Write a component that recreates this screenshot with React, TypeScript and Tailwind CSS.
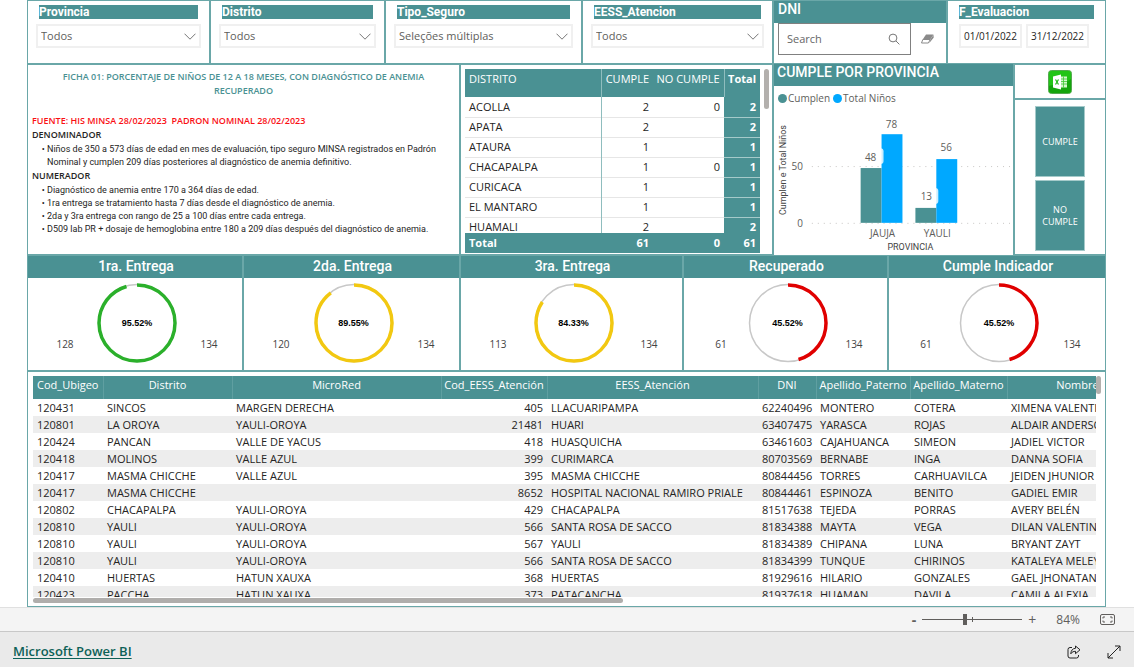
import { ReactNode } from "react";

const sum = { cumple: 61, noCumple: 0, total: 61 };

const districts = [
  { name: "ACOLLA", cumple: 2, noCumple: 0, total: 2 },
  { name: "APATA", cumple: 2, total: 2 },
  { name: "ATAURA", cumple: 1, total: 1 },
  { name: "CHACAPALPA", cumple: 1, noCumple: 0, total: 1 },
  { name: "CURICACA", cumple: 1, total: 1 },
  { name: "EL MANTARO", cumple: 1, total: 1 },
  { name: "HUAMALI", cumple: 2, total: 2 },
];

const gauges = [
  { title: "1ra. Entrega", value: 128, total: 134, percent: 95.52, color: "#2bb02b" },
  { title: "2da. Entrega", value: 120, total: 134, percent: 89.55, color: "#f2c811" },
  { title: "3ra. Entrega", value: 113, total: 134, percent: 84.33, color: "#f2c811" },
  { title: "Recuperado", value: 61, total: 134, percent: 45.52, color: "#e00000" },
  { title: "Cumple Indicador", value: 61, total: 134, percent: 45.52, color: "#e00000" },
];

const columns = [
  { name: "Cod_Ubigeo", width: "w-[70px]" },
  { name: "Distrito", width: "w-[129px]" },
  { name: "MicroRed", width: "w-[209px]" },
  { name: "Cod_EESS_Atención", width: "w-[106px]", right: true },
  { name: "EESS_Atención", width: "w-[211px]" },
  { name: "DNI", width: "w-[58px]", right: true },
  { name: "Apellido_Paterno", width: "w-[94px]" },
  { name: "Apellido_Materno", width: "w-[97px]" },
  { name: "Nombres", width: "w-[146px]" },
];

const rows = [
  ["120431", "SINCOS", "MARGEN DERECHA", "405", "LLACUARIPAMPA", "62240496", "MONTERO", "COTERA", "XIMENA VALENTINA"],
  ["120801", "LA OROYA", "YAULI-OROYA", "21481", "HUARI", "63407475", "YARASCA", "ROJAS", "ALDAIR ANDERSON"],
  ["120424", "PANCAN", "VALLE DE YACUS", "418", "HUASQUICHA", "63461603", "CAJAHUANCA", "SIMEON", "JADIEL VICTOR"],
  ["120418", "MOLINOS", "VALLE AZUL", "399", "CURIMARCA", "80703569", "BERNABE", "INGA", "DANNA SOFIA"],
  ["120417", "MASMA CHICCHE", "VALLE AZUL", "395", "MASMA CHICCHE", "80844456", "TORRES", "CARHUAVILCA", "JEIDEN JHUNIOR"],
  ["120417", "MASMA CHICCHE", "", "8652", "HOSPITAL NACIONAL RAMIRO PRIALE", "80844461", "ESPINOZA", "BENITO", "GADIEL EMIR"],
  ["120802", "CHACAPALPA", "YAULI-OROYA", "429", "CHACAPALPA", "81517638", "TEJEDA", "PORRAS", "AVERY BELÉN"],
  ["120810", "YAULI", "YAULI-OROYA", "566", "SANTA ROSA DE SACCO", "81834388", "MAYTA", "VEGA", "DILAN VALENTIN"],
  ["120810", "YAULI", "YAULI-OROYA", "567", "YAULI", "81834389", "CHIPANA", "LUNA", "BRYANT ZAYT"],
  ["120810", "YAULI", "YAULI-OROYA", "566", "SANTA ROSA DE SACCO", "81834399", "TUNQUE", "CHIRINOS", "KATALEYA MELEY"],
  ["120410", "HUERTAS", "HATUN XAUXA", "368", "HUERTAS", "81929616", "HILARIO", "GONZALES", "GAEL JHONATAN"],
  ["120423", "PACCHA", "HATUN XAUXA", "373", "PATACANCHA", "81937618", "HUAMAN", "DAVILA", "CAMILA ALEXIA"],
];

function Panel({ className = "", children }: { className?: string; children: ReactNode }) {
  return (
    <section className={"min-w-0 border border-[#6aa7a8] bg-white " + className}>{children}</section>
  );
}

function SlicerTitle({ children }: { children: ReactNode }) {
  return (
    <span className="block h-[14px] bg-[#4a9193] font-['Roboto',sans-serif] text-xs leading-[14px] font-bold text-white">
      {children}
    </span>
  );
}

function Slicer({ title, value }: { title: string; value: string }) {
  return (
    <Panel className="px-2 pt-1">
      <label>
        <span className="block px-[3px]">
          <SlicerTitle>{title}</SlicerTitle>
        </span>
        <span className="mt-[5px] grid items-center">
          <select className="h-6 w-full appearance-none border-2 border-[#f0f0f0] bg-white px-[3px] text-[11px] text-[#605e5c] [grid-area:1/1]">
            <option>{value}</option>
          </select>
          <svg
            viewBox="0 0 12 7"
            className="pointer-events-none mr-[5px] h-[7px] w-3 justify-self-end [grid-area:1/1]"
            fill="none"
            stroke="#777"
          >
            <path d="M0.5 0.7 6 6.2 11.5 0.7" />
          </svg>
        </span>
      </label>
    </Panel>
  );
}

function SearchSlicer() {
  return (
    <Panel>
      <label htmlFor="dni" className="block h-[22px] bg-[#4a9193] px-1 font-['Roboto',sans-serif] text-sm leading-4 font-medium text-white">
        DNI
      </label>
      <div className="flex items-center pl-1">
        <div className="flex h-8 w-[133px] items-center border border-[#808080] pr-[10px] pl-2">
          <input
            id="dni"
            placeholder="Search"
            className="min-w-0 flex-1 text-[11px] outline-none placeholder:text-[#666]"
          />
          <svg viewBox="0 0 12 12" className="size-3" fill="none" stroke="#777">
            <circle cx="5" cy="5" r="3.9" />
            <path d="m8 8 3.4 3.4" />
          </svg>
        </div>
        <button aria-label="Borrar" className="ml-[10px]">
          <svg viewBox="0 0 13 10" className="h-[10px] w-[13px]">
            <path d="M5 0.5h7.5L9.6 5H2z" fill="#8a8a8a" />
            <path d="M1.8 5.5h7.4L7.4 9H0.5z" fill="#fff" stroke="#8a8a8a" />
            <path d="M12.6 0.8v3L8.3 9 9.6 5z" fill="#8a8a8a" />
          </svg>
        </button>
      </div>
    </Panel>
  );
}

function DateSlicer() {
  return (
    <Panel className="px-[11px] pt-1">
      <SlicerTitle>F_Evaluacion</SlicerTitle>
      <div className="mt-[5px] flex gap-1">
        {["01/01/2022", "31/12/2022"].map((date, i) => (
          <input
            key={date}
            aria-label={i ? "Hasta" : "Desde"}
            defaultValue={date}
            className="h-6 w-[63px] border-2 border-[#f0f0f0] text-center text-[10px] text-[#252423]"
          />
        ))}
      </div>
    </Panel>
  );
}

function Sheet() {
  return (
    <Panel className="px-1 pt-[5px] text-[9px] leading-[14px] text-[#252423]">
      <h1 className="px-6 text-center font-semibold text-[#4a9193]">
        FICHA 01: PORCENTAJE DE NIÑOS DE 12 A 18 MESES, CON DIAGNÓSTICO DE ANEMIA RECUPERADO
      </h1>
      <p className="mt-4 font-semibold whitespace-pre text-[#fa0f14]">
        {"FUENTE: HIS MINSA 28/02/2023  PADRON NOMINAL 28/02/2023"}
      </p>
      <h2 className="font-semibold">DENOMINADOR</h2>
      <ul className="list-['•_'] pt-px pr-2 pl-[15px] font-['Roboto',sans-serif] leading-[13px]">
        <li>
          Niños de 350 a 573 días de edad en mes de evaluación, tipo seguro MINSA registrados en Padrón
          Nominal y cumplen 209 días posteriores al diagnóstico de anemia definitivo.
        </li>
      </ul>
      <h2 className="font-semibold">NUMERADOR</h2>
      <ul className="list-['•_'] pt-px pr-2 pl-[15px] font-['Roboto',sans-serif] leading-[13px]">
        <li>Diagnóstico de anemia entre 170 a 364 días de edad.</li>
        <li>1ra entrega se tratamiento hasta 7 días desde el diagnóstico de anemia.</li>
        <li>2da y 3ra entrega con rango de 25 a 100 días entre cada entrega.</li>
        <li>D509 lab PR + dosaje de hemoglobina entre 180 a 209 días después del diagnóstico de anemia.</li>
      </ul>
    </Panel>
  );
}

function Matrix() {
  return (
    <Panel className="flex gap-1 pt-1 pr-[3px] pl-1">
      <div className="flex h-[184px] min-w-0 flex-1 flex-col text-[11px]">
        <div className="min-h-0 flex-1 overflow-hidden">
          <table className="w-full table-fixed border-collapse text-right text-[#252423]">
            <thead>
              <tr className="h-7 bg-[#4a9193] align-top leading-5 text-white">
                <th className="border-r border-[#8fbdbe] px-1 text-left font-normal">DISTRITO</th>
                <th className="w-[52px] pr-1 font-normal">CUMPLE</th>
                <th className="w-[71px] pr-1 font-normal">NO CUMPLE</th>
                <th className="w-9 border-l border-[#8fbdbe] pr-1 font-bold">Total</th>
              </tr>
            </thead>
            <tbody>
              {districts.map((d) => (
                <tr key={d.name} className="h-5 border-b border-[#e6e6e6]">
                  <td className="border-r border-[#8fbdbe] px-1 text-left">{d.name}</td>
                  <td className="pr-1">{d.cumple}</td>
                  <td className="pr-1">{d.noCumple}</td>
                  <td className="border-b border-[#a5caca] bg-[#4a9193] pr-1 font-bold text-white">{d.total}</td>
                </tr>
              ))}
            </tbody>
          </table>
        </div>
        <table className="w-full table-fixed bg-[#4a9193] text-right font-bold text-white">
          <tbody>
            <tr className="h-5">
              <td className="px-1 text-left">Total</td>
              <td className="w-[52px] pr-1">{sum.cumple}</td>
              <td className="w-[71px] pr-1">{sum.noCumple}</td>
              <td className="w-9 pr-1">{sum.total}</td>
            </tr>
          </tbody>
        </table>
      </div>
      <div className="h-10 w-[5px] rounded-full bg-[#b3b0ad]" />
    </Panel>
  );
}

function Chart() {
  return (
    <Panel className="border-y-0">
      <h2 className="h-[22px] bg-[#4a9193] px-[3px] font-['Roboto',sans-serif] text-sm leading-4 font-medium text-white">
        CUMPLE POR PROVINCIA
      </h2>
      <ul className="flex h-6 items-center gap-[3px] pl-1 text-[10px] text-[#605e5c]">
        <li className="flex items-center gap-px">
          <span className="size-[9px] rounded-full bg-[#4a9193]" />
          Cumplen
        </li>
        <li className="flex items-center gap-px">
          <span className="size-[9px] rounded-full bg-[#00a8ff]" />
          Total Niños
        </li>
      </ul>
      <svg viewBox="0 0 240 145" className="h-[145px] w-full" fill="#605e5c" fontSize="10">
        <g stroke="#c8c6c4" strokeDasharray="1 5">
          <path d="M38 56.5h200M38 113.5h200" />
        </g>
        <rect x="87" y="58" width="21" height="55" fill="#4a9193" />
        <rect x="108" y="24" width="21" height="89" fill="#00a8ff" />
        <rect x="142" y="98" width="21" height="15" fill="#4a9193" />
        <rect x="163" y="49" width="21" height="64" fill="#00a8ff" />
        <rect x="87" y="38" width="23" height="16" rx="3" fill="#fff" fillOpacity="0.8" />
        <rect x="142" y="78" width="23" height="16" rx="3" fill="#fff" fillOpacity="0.8" />
        <g textAnchor="middle">
          <text x="97" y="51">48</text>
          <text x="118" y="18">78</text>
          <text x="153" y="90">13</text>
          <text x="173" y="41">56</text>
          <text x="109" y="127">JAUJA</text>
          <text x="164" y="127">YAULI</text>
          <g fontSize="9" fill="#444" fontFamily="Roboto, sans-serif">
            <text x="137" y="140">PROVINCIA</text>
            <text transform="translate(12 60) rotate(-90)">Cumplen e Total Niños</text>
          </g>
        </g>
        <g textAnchor="end">
          <text x="29" y="60">50</text>
          <text x="29" y="117">0</text>
        </g>
      </svg>
    </Panel>
  );
}

function Actions() {
  return (
    <div className="flex min-w-0 flex-col">
      <Panel className="flex h-[35px] items-center justify-center">
        <button aria-label="Excel">
          <svg viewBox="0 0 24 24" className="size-6">
            <rect x="0.5" y="0.5" width="23" height="23" rx="3" fill="#22c416" stroke="#55a850" />
            <path d="M1 16C8 14 16 14 23 9v11a3 3 0 0 1-3 3H4a3 3 0 0 1-3-3z" fill="#14a50c" />
            <path d="M12 6.500h7v11h-7z" fill="#d4f6cd" />
            <path d="M13 9h6M13 11.500h6M13 14h6M15.500 6.500v11" stroke="#3cc832" strokeWidth="0.8" />
            <path d="m5 6.500 8-2v15l-8-2z" fill="#fff" />
            <path d="m7.500 9.500 3 5M10.500 9.500l-3 5" stroke="#1fb814" strokeWidth="1.2" />
          </svg>
        </button>
      </Panel>
      <Panel className="flex flex-1 flex-col items-center gap-[3px] pt-[6px] text-[9px]">
        <button className="h-[71px] w-[50px] border border-[#a5caca] bg-[#4a9193] leading-3 text-white">CUMPLE</button>
        <button className="h-[71px] w-[50px] border border-[#a5caca] bg-[#4a9193] px-1 leading-3 text-white">NO CUMPLE</button>
      </Panel>
    </div>
  );
}

function Gauge({ title, value, total, percent, color }: (typeof gauges)[number]) {
  return (
    <Panel>
      <h2 className="h-[22px] bg-[#4a9193] pl-[2px] text-center font-['Roboto',sans-serif] text-sm leading-5 font-medium text-white">
        {title}
      </h2>
      <div className="flex justify-between pt-[5px] pr-[21px] pl-[25px] text-[10px] text-[#444]">
        <span className="w-6 pt-[54px] text-center">{value}</span>
        <div className="grid place-items-center">
          <svg viewBox="0 0 80 80" className="size-20 -rotate-90 [grid-area:1/1]" fill="none">
            <circle cx="40" cy="40" r="38.500" stroke="#c8c8c8" strokeWidth="1.500" />
            <circle
              cx="40"
              cy="40"
              r="38"
              stroke={color}
              strokeWidth="3.500"
              pathLength="100"
              strokeDasharray={`${percent} 100`}
            />
          </svg>
          <b className="pt-[2px] font-['Liberation_Sans',sans-serif] text-[9px] text-black [grid-area:1/1]">{percent}%</b>
        </div>
        <span className="w-6 pt-[54px] text-center">{total}</span>
      </div>
    </Panel>
  );
}

function Children() {
  return (
    <Panel className="flex min-h-0 flex-1 flex-col pt-1 pb-[3px] pl-[5px]">
      <div className="flex min-h-0 flex-1">
        <div className="min-w-0 flex-1 overflow-hidden">
          <table className="w-[1120px] table-fixed text-[11px] whitespace-nowrap text-[#252423]">
            <thead>
              <tr className="h-[23px] bg-[#4a9193] align-top leading-[18px] text-white">
                {columns.map((c) => (
                  <th key={c.name} className={"border-r border-[#5f9fa1] font-normal " + c.width}>
                    {c.name}
                  </th>
                ))}
              </tr>
            </thead>
            <tbody>
              {rows.map((row, i) => (
                <tr key={i} className="h-[17px] leading-[17px] even:bg-[#ededed]">
                  {row.map((cell, j) => (
                    <td key={j} className={"px-1 " + (columns[j].right ? "text-right" : "text-left")}>
                      {cell}
                    </td>
                  ))}
                </tr>
              ))}
            </tbody>
          </table>
        </div>
        <div className="mr-1 h-[18px] w-[5px] rounded-full bg-[#b3b0ad]" />
      </div>
      <div className="mt-px h-[5px] w-[55%] rounded-full bg-[#b0aeac]" />
    </Panel>
  );
}

function ZoomBar() {
  return (
    <div className="flex h-6 items-center justify-end border-t border-[#e0e0e0] bg-[#f4f4f4] pr-[19px] text-[#605e5c]">
      <button aria-label="Reducir" className="text-sm leading-4 font-bold">-</button>
      <div className="mr-[2px] ml-[6px] grid w-[100px] items-center">
        <span className="ml-[50px] h-[5px] w-px bg-[#605e5c] [grid-area:1/1]" />
        <input
          type="range"
          aria-label="Zoom"
          defaultValue={42}
          className="
            h-px w-full appearance-none bg-[#605e5c] [grid-area:1/1]
            [&::-webkit-slider-thumb]:h-[11px] [&::-webkit-slider-thumb]:w-1
            [&::-webkit-slider-thumb]:appearance-none [&::-webkit-slider-thumb]:bg-[#605e5c]
          "
        />
      </div>
      <button aria-label="Ampliar" className="px-1 text-sm leading-4">+</button>
      <span className="ml-4 text-xs">84%</span>
      <button aria-label="Ajustar a la página" className="ml-5">
        <svg viewBox="0 0 15 11" className="h-[11px] w-[15px]" fill="none" stroke="#605e5c">
          <rect x="0.5" y="0.5" width="14" height="10" rx="1.500" />
          <path d="M3 4.500v-1.500h2M10 3h2v1.500M12 6.500v1.500h-2M5 8h-2v-1.500" />
        </svg>
      </button>
    </div>
  );
}

function Footer() {
  return (
    <footer className="flex h-9 items-center border-t border-[#c8c8c8] bg-[#eaeaea] px-[13px] pt-1">
      <a href="#" className="text-[13px] font-semibold text-[#0d6157] underline underline-offset-2">
        Microsoft Power BI
      </a>
      <button aria-label="Compartir" className="ml-auto">
        <svg viewBox="0 0 14 14" className="size-[14px]" fill="none" stroke="#222" strokeLinejoin="round">
          <path d="M5 2.500H3a2 2 0 0 0-2 2V11a2 2 0 0 0 2 2h6.500a2 2 0 0 0 2-2v-1" />
          <path d="M8.500 1v2.300C5.500 3.500 4 5.500 3.800 8.800 5 7 6.500 6.300 8.500 6.300v2.400L13 4.800z" />
        </svg>
      </button>
      <button aria-label="Pantalla completa" className="ml-[26px]">
        <svg viewBox="0 0 14 14" className="size-[14px]" fill="none" stroke="#222">
          <path d="M1 13 13 1M8 1h5v5M1 8v5h5" />
        </svg>
      </button>
    </footer>
  );
}

export default function App() {
  return (
    <div className="flex h-screen flex-col bg-white font-['Open_Sans','Noto_Sans',sans-serif]">
      <main className="flex min-h-0 flex-1 flex-col pr-7 pl-[27px]">
        <div className="grid h-16 grid-cols-[183fr_175fr_197fr_191fr_174fr_159fr]">
          <Slicer title="Provincia" value="Todos" />
          <Slicer title="Distrito" value="Todos" />
          <Slicer title="Tipo_Seguro" value="Seleções múltiplas" />
          <Slicer title="EESS_Atencion" value="Todos" />
          <SearchSlicer />
          <DateSlicer />
        </div>
        <div className="grid h-[191px] grid-cols-[433fr_313fr_241fr_92fr]">
          <Sheet />
          <Matrix />
          <Chart />
          <Actions />
        </div>
        <div className="grid h-[116px] grid-cols-[216fr_217fr_223fr_205fr_218fr]">
          {gauges.map((g) => (
            <Gauge key={g.title} {...g} />
          ))}
        </div>
        <Children />
      </main>
      <ZoomBar />
      <Footer />
    </div>
  );
}
